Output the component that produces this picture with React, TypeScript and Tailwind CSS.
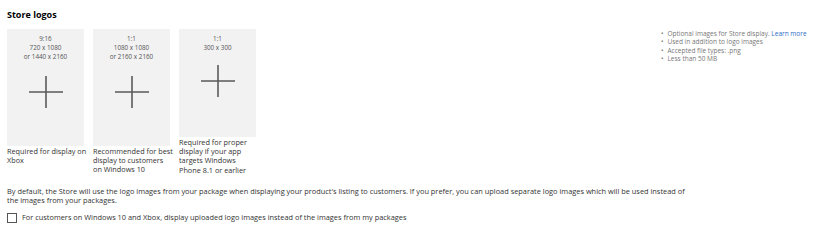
import React from "react";

const logos = [
  {
    ratio: "9:16",
    sizes: ["720 x 1080", "or 1440 x 2160"],
    h: "h-[117px]",
    caption: ["Required for display on", "Xbox"],
  },
  {
    ratio: "1:1",
    sizes: ["1080 x 1080", "or 2160 x 2160"],
    h: "h-[117px]",
    caption: ["Recommended for best", "display to customers", "on Windows 10"],
  },
  {
    ratio: "1:1",
    sizes: ["300 x 300"],
    h: "h-[108px]",
    caption: ["Required for proper", "display if your app", "targets Windows", "Phone 8.1 or earlier"],
  },
];

const notes = ["Used in addition to logo images", "Accepted file types: .png", "Less than 50 MB"];

const Plus = () => (
  <svg width="34" height="32" viewBox="0 0 34 32" className="block">
    <path d="M17 0V32M0 16H34" stroke="#5a5a5a" strokeWidth="1.6" />
  </svg>
);

const App = () => {
  return (
    <div className="w-[818px] h-[248px] bg-white text-[#333] font-['Open_Sans',sans-serif] pl-[7px] pt-[7px]">
      <h2 className="text-[9px] font-bold text-black leading-[15px]">Store logos</h2>
      <div className="flex">
        {/* logo slots */}
        <div className="flex-1 flex gap-[9px] mt-[7px]">
          {logos.map((l, i) => (
            <div key={i} className="w-[77px]">
              <div className={`${l.h} bg-[#f2f2f2] flex flex-col items-center pt-[5px]`}>
                <div className="text-[6.3px] leading-[9px] text-[#555] text-center">
                  <div>{l.ratio}</div>
                  {l.sizes.map((s) => (
                    <div key={s}>{s}</div>
                  ))}
                </div>
                <div className={i === 2 ? "mt-[13px]" : "mt-[15px]"}>
                  <Plus />
                </div>
              </div>
              <div className="text-[7.3px] leading-[9.2px] text-[#333] pt-[1px] whitespace-nowrap">
                {l.caption.map((c) => (
                  <div key={c}>{c}</div>
                ))}
              </div>
            </div>
          ))}
        </div>
        {/* side notes */}
        <ul className="w-[157px] pt-[8px] text-[6.5px] leading-[8.3px] text-[#777]">
          <li className="flex gap-[4px]">
            <span>•</span>
            <span>
              Optional images for Store display. <span className="text-[#2b6cc4]">Learn more</span>
            </span>
          </li>
          {notes.map((n) => (
            <li key={n} className="flex gap-[4px]">
              <span>•</span>
              <span>{n}</span>
            </li>
          ))}
        </ul>
      </div>
      <p className="text-[7.4px] leading-[9px] text-[#333] mt-[12px] max-w-[682px]">
        By default, the Store will use the logo images from your package when displaying your product's listing to
        customers. If you prefer, you can upload separate logo images which will be used instead of the images from
        your packages.
      </p>
      <label className="flex items-center gap-[5px] mt-[8px]">
        <span className="w-[10px] h-[10px] border border-[#555] bg-white shrink-0" />
        <span className="text-[7.4px] leading-[9px] text-[#333]">
          For customers on Windows 10 and Xbox, display uploaded logo images instead of the images from my packages
        </span>
      </label>
    </div>
  );
};

export default App;
